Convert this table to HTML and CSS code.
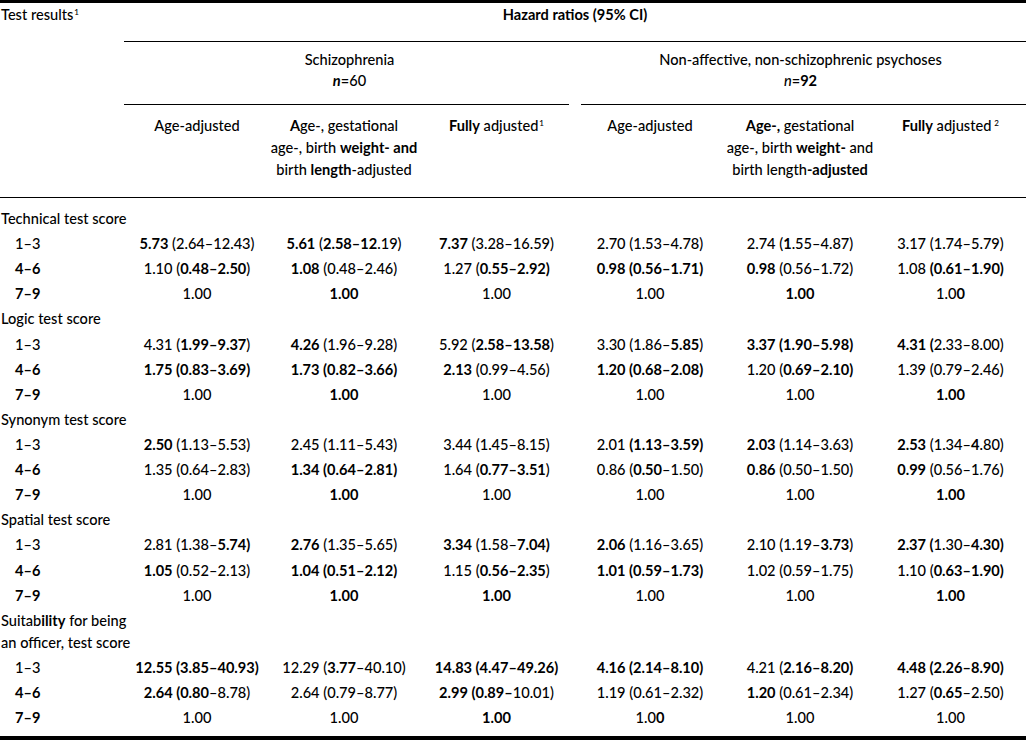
FILE: index.html
```html
<!DOCTYPE html>
<html lang="en">
<head>
<meta charset="utf-8">
<title>Hazard ratios table</title>
<link rel="stylesheet" href="styles.css">
</head>
<body>
<table class="hr-table">
  <colgroup>
    <col class="c-label">
    <col class="c-s1">
    <col class="c-s2">
    <col class="c-s3">
    <col class="c-n1">
    <col class="c-n2">
    <col class="c-n3">
  </colgroup>
  <thead>
    <tr class="h1">
      <th class="corner" rowspan="3">Test results<sup>1</sup></th>
      <th class="title" colspan="6"><b>Hazard ratios (95% CI)</b></th>
    </tr>
    <tr class="h2">
      <th class="group group-left" colspan="3">Schizophrenia<br><b><i>n</i></b>=60</th>
      <th class="group group-right" colspan="3">Non-affective, non-schizophrenic psychoses<br><i>n</i>=<b>92</b></th>
    </tr>
    <tr class="h3">
      <th>Age-adjusted</th>
      <th><b>A</b>ge-, gestational<br>age-, birth <b>weight- and</b><br>birth <b>length</b>-adjusted</th>
      <th><b>Fully</b> adjusted<sup>1</sup></th>
      <th>Age-adjusted</th>
      <th><b>Age-,</b> gestational<br>age-, birth <b>weight-</b> and<br>birth length<b>-adjusted</b></th>
      <th><b>Fully</b> adjusted<sup class="sp">2</sup></th>
    </tr>
  </thead>
  <tbody>
    <tr class="section first"><td colspan="7">Technical test score</td></tr>
    <tr>
      <td class="lvl">1–3</td>
      <td><b>5.73</b> (2.64–12.43)</td>
      <td><b>5.61</b> (<b>2.58–12</b>.19)</td>
      <td><b>7.37</b> (3.28–16.59)</td>
      <td>2.70 (1.53–4.78)</td>
      <td>2.74 (<b>1</b>.55–4.87)</td>
      <td>3.17 (1.74–5.79)</td>
    </tr>
    <tr>
      <td class="lvl"><b>4–6</b></td>
      <td>1.10 (<b>0.48–2.50</b>)</td>
      <td><b>1.08</b> (0.48–2.46)</td>
      <td>1.27 (<b>0.55–2.92)</b></td>
      <td><b>0.98 (0.56–1.71)</b></td>
      <td><b>0.98</b> (0.56–1.72)</td>
      <td>1.08 <b>(0.61–1.90)</b></td>
    </tr>
    <tr>
      <td class="lvl"><b>7–9</b></td>
      <td>1.00</td>
      <td><b>1.00</b></td>
      <td>1.00</td>
      <td>1.00</td>
      <td><b>1.00</b></td>
      <td>1.0<b>0</b></td>
    </tr>
    <tr class="section"><td colspan="7">Logic test score</td></tr>
    <tr>
      <td class="lvl">1–3</td>
      <td>4.31 (<b>1.99–9.37</b>)</td>
      <td><b>4.26</b> (1.96–9.28)</td>
      <td>5.92 (<b>2.58–13.58</b>)</td>
      <td>3.30 (1.86–<b>5.85</b>)</td>
      <td><b>3.37 (1.90–5.98)</b></td>
      <td><b>4.31 (</b>2.33–8.00)</td>
    </tr>
    <tr>
      <td class="lvl"><b>4–6</b></td>
      <td><b>1.75 (0.83–3.69)</b></td>
      <td><b>1.73 (0.82–3.66)</b></td>
      <td><b>2.13</b> (0.99–4.56)</td>
      <td><b>1.20 (0.68–2.08)</b></td>
      <td>1.20 (<b>0.69–2.10)</b></td>
      <td>1.39 (0.79–2.46)</td>
    </tr>
    <tr>
      <td class="lvl"><b>7–9</b></td>
      <td>1.00</td>
      <td><b>1.00</b></td>
      <td>1.00</td>
      <td>1.00</td>
      <td>1.00</td>
      <td><b>1.00</b></td>
    </tr>
    <tr class="section"><td colspan="7">Synonym test score</td></tr>
    <tr>
      <td class="lvl">1–3</td>
      <td><b>2.50</b> (1.13–5.53)</td>
      <td>2.45 (1.11–5.43)</td>
      <td>3.44 (1.45–8.15)</td>
      <td>2.01 <b>(1.13–3.59)</b></td>
      <td><b>2.03</b> (1.14–3.63)</td>
      <td><b>2.53</b> (1.34–<b>4</b>.80)</td>
    </tr>
    <tr>
      <td class="lvl"><b>4–6</b></td>
      <td>1.35 (0.64–2.83)</td>
      <td><b>1.34 (0.64–2.81)</b></td>
      <td>1.64 (<b>0.77–3.51</b>)</td>
      <td>0.86 (<b>0.50</b>–1.50)</td>
      <td><b>0.86</b> (0.50–1.50)</td>
      <td><b>0.99</b> (0.56–1.76)</td>
    </tr>
    <tr>
      <td class="lvl"><b>7–9</b></td>
      <td>1.00</td>
      <td><b>1.00</b></td>
      <td>1.00</td>
      <td>1.00</td>
      <td>1.00</td>
      <td><b>1.00</b></td>
    </tr>
    <tr class="section"><td colspan="7">Spatial test score</td></tr>
    <tr>
      <td class="lvl">1–3</td>
      <td>2.81 (1.38–<b>5.74)</b></td>
      <td><b>2.76</b> (1.35–5.65)</td>
      <td><b>3.34</b> (1.58–<b>7.04)</b></td>
      <td><b>2.06</b> (1.16–3.65)</td>
      <td>2.10 (1.19–<b>3.73</b>)</td>
      <td><b>2.37 (</b>1.30–<b>4.30)</b></td>
    </tr>
    <tr>
      <td class="lvl"><b>4–6</b></td>
      <td><b>1.05</b> (0.52–2.13)</td>
      <td><b>1.04 (0.51–2.12)</b></td>
      <td>1.15 (<b>0.56–2.35</b>)</td>
      <td><b>1.01 (0.59–1.73)</b></td>
      <td>1.02 (0.59–1.75)</td>
      <td>1.10 (<b>0.63–1.90)</b></td>
    </tr>
    <tr>
      <td class="lvl"><b>7–9</b></td>
      <td>1.00</td>
      <td><b>1.00</b></td>
      <td><b>1.00</b></td>
      <td>1.00</td>
      <td>1.00</td>
      <td><b>1.00</b></td>
    </tr>
    <tr class="section"><td colspan="7">Suitab<b>ility</b> for being<br>an officer, test score</td></tr>
    <tr>
      <td class="lvl">1–3</td>
      <td><b>12.55 (3.85–40.93)</b></td>
      <td>12.29 (<b>3.77</b>–40.10)</td>
      <td><b>14.83 (4.47–49.26)</b></td>
      <td><b>4.16 (2.14–8.10)</b></td>
      <td>4.21 (<b>2.16–8.20)</b></td>
      <td><b>4.48 (2.26–8.90)</b></td>
    </tr>
    <tr>
      <td class="lvl"><b>4–6</b></td>
      <td><b>2.64 (0.80</b>–8.78)</td>
      <td>2.64 (0.79–8.77)</td>
      <td><b>2.99 (0.89–</b>10.01)</td>
      <td>1.19 (0.61–2.32)</td>
      <td><b>1.20</b> (0.61–2.34)</td>
      <td>1.27 (<b>0.65</b>–2.50)</td>
    </tr>
    <tr class="last">
      <td class="lvl"><b>7–9</b></td>
      <td>1.00</td>
      <td>1.00</td>
      <td><b>1.00</b></td>
      <td>1.0<b>0</b></td>
      <td>1.00</td>
      <td>1.00</td>
    </tr>
  </tbody>
</table>
</body>
</html>
```
FILE: styles.css
```css
html, body {
  margin: 0;
  padding: 0;
  background: #ffffff;
}

body {
  font-family: "Lato", "Open Sans", "Liberation Sans", sans-serif;
  font-size: 14.6px;
  font-weight: 500;
  color: #000000;
}

.hr-table {
  width: 1026px;
  border-collapse: separate;
  border-spacing: 0;
  table-layout: fixed;
  border-top: 3px solid #000;
  border-bottom: 4px solid #000;
}

.c-label { width: 124px; }
.c-s1 { width: 146px; }
.c-s2 { width: 148px; }
.c-s3 { width: 157px; }
.c-n1 { width: 150px; }
.c-n2 { width: 150px; }
.c-n3 { width: 151px; }

th, td {
  padding: 0;
  font-weight: 500;
  vertical-align: top;
}

b { font-weight: 700; }

sup {
  font-size: 8px;
  line-height: 0;
  vertical-align: 5px;
  margin-left: 1px;
}

sup.sp { margin-left: 3px; }

thead th {
  text-align: center;
  line-height: 22px;
  white-space: nowrap;
}

.corner {
  text-align: left;
  padding: 1px 0 0 1px;
  border-bottom: 1px solid #000;
}

.h1 .title {
  padding: 1px 0 15px;
  border-bottom: 1px solid #000;
}

.h2 th {
  line-height: 21px;
  padding: 7px 0 14px;
}

.group-left {
  background: linear-gradient(#000, #000) left bottom / calc(100% - 6px) 1px no-repeat;
}

.group-right {
  background: linear-gradient(#000, #000) right bottom / calc(100% - 6px) 1px no-repeat;
}

.h3 th {
  padding: 10px 0 16px;
  border-bottom: 1px solid #000;
}

tbody td {
  line-height: 22px;
  padding: 2px 0 1.12px;
  text-align: center;
  white-space: nowrap;
}

tbody .section td {
  text-align: left;
  padding-left: 1px;
}

tbody td.lvl {
  text-align: left;
  padding-left: 15px;
}

tbody .first td {
  padding-top: 10px;
}

tbody .last td {
  padding-bottom: 7px;
}
```
